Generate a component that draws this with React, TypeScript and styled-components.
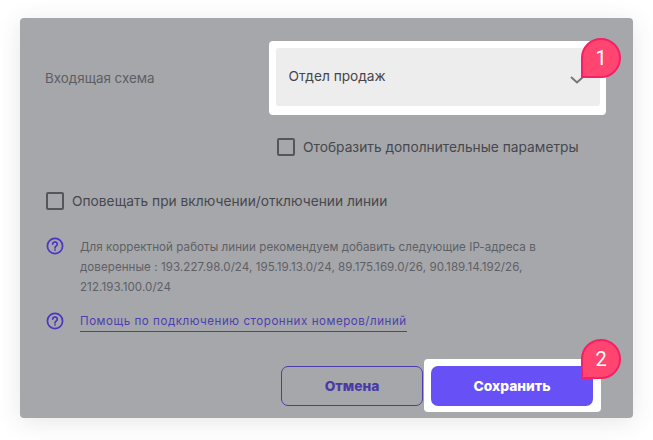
import React, { FC } from 'react';
import styled, { createGlobalStyle } from 'styled-components';

const GlobalStyle = createGlobalStyle`
  html, body {
    margin: 0;
    padding: 0;
    background: #ffffff;
  }
  body {
    font-family: Inter, "Noto Sans", "Liberation Sans", sans-serif;
  }
`;

const Page = styled.div`
  width: 653px;
  height: 440px;
  padding: 18px 20px 22px;
  box-sizing: border-box;
  overflow: hidden;
`;

const Modal = styled.div`
  height: 400px;
  padding: 23px 27px 0 25px;
  box-sizing: border-box;
  background-color: #a6a7ab;
  border-radius: 4px;
  box-shadow: 0 4px 24px rgba(60, 60, 70, 0.12);
`;

const SchemeRow = styled.div`
  display: grid;
  grid-template-columns: 224px 337px;
  align-items: center;
`;

const FieldLabel = styled.span`
  font-size: 13.4px;
  color: #5d5e63;
`;

const Highlight = styled.div<{ $pad: string }>`
  position: relative;
  padding: ${(p) => p.$pad};
  background-color: #ffffff;
  border-radius: 4px;
`;

const Select = styled.div`
  height: 58px;
  padding: 0 16px 2px 12.5px;
  display: flex;
  align-items: center;
  justify-content: space-between;
  box-sizing: border-box;
  background-color: #ededed;
  border-radius: 3px;
  font-size: 13.7px;
  color: #45464b;
`;

const Chevron = styled.svg`
  width: 14px;
  height: 8px;
  margin-top: 8px;
`;

const Badge = styled.div<{ $top: number; $right: number }>`
  position: absolute;
  top: ${(p) => p.$top}px;
  right: ${(p) => p.$right}px;
  width: 40px;
  height: 40px;
  box-sizing: border-box;
  display: flex;
  align-items: center;
  justify-content: center;
  background-color: #ff4570;
  border: 2px solid #f52066;
  border-radius: 50% 50% 50% 0;
  font-family: Roboto, "Liberation Sans", sans-serif;
  font-size: 20px;
  color: #ffffff;
`;

const CheckRow = styled.label<{ $indent: number; $top: number }>`
  display: flex;
  align-items: center;
  gap: 8px;
  margin: ${(p) => p.$top}px 0 0 ${(p) => p.$indent}px;
  font-size: 13.75px;
  color: #47484d;
`;

const Box = styled.span`
  width: 18px;
  height: 18px;
  box-sizing: border-box;
  border: 2px solid #55565b;
  border-radius: 2px;
`;

const Note = styled.div<{ $top: number }>`
  display: flex;
  gap: 16px;
  margin: ${(p) => p.$top}px 0 0 1px;
`;

const NoteIcon = styled.svg`
  flex: none;
  width: 18px;
  height: 18px;
`;

const NoteText = styled.p`
  margin: 0;
  width: 470px;
  font-size: 11.6px;
  letter-spacing: 0.05px;
  line-height: 20px;
  color: #5f6065;
`;

const HelpLink = styled.a`
  height: 19px;
  font-size: 11.6px;
  letter-spacing: 0.52px;
  line-height: 19px;
  color: #4d3fae;
  border-bottom: 1px solid #4a3cc0;
`;

const Footer = styled.div`
  display: flex;
  justify-content: flex-end;
  align-items: center;
  margin: 27px 5px 0 0;
`;

const CancelBtn = styled.button`
  width: 142px;
  height: 40px;
  margin-right: 1px;
  padding: 0;
  background: transparent;
  border: 1px solid #4a3cab;
  border-radius: 7px;
  font: 800 13.8px Inter, "Noto Sans", sans-serif;
  color: #4a3aa6;
`;

const SaveBtn = styled.button`
  display: block;
  width: 162px;
  height: 40px;
  padding: 0;
  background-color: #6750f5;
  border: 0;
  border-radius: 7px;
  font: 800 13.8px Inter, "Noto Sans", sans-serif;
  color: #ffffff;
`;

const HelpIcon: FC = () => (
  <NoteIcon viewBox="0 0 18 18" fill="none" stroke="#4a35c4" strokeWidth="1.7">
    <circle cx="9" cy="9" r="7.6" />
    <path d="M6.7 7.1a2.3 2.3 0 1 1 3.5 2c-.8.5-1.2.9-1.2 1.8" strokeLinecap="round" />
    <circle cx="9" cy="13" r="0.5" fill="#4a35c4" strokeWidth="0.8" />
  </NoteIcon>
);

const App: FC = () => (
  <Page>
    <GlobalStyle />
    <Modal>
      <SchemeRow>
        <FieldLabel>Входящая схема</FieldLabel>
        <Highlight $pad="7px 6px 9px 7px">
          <Select>
            Отдел продаж
            <Chevron viewBox="0 0 14 8" fill="none" stroke="#75767a" strokeWidth="2">
              <path d="M1 1l6 5.5L13 1" />
            </Chevron>
          </Select>
          <Badge $top={-3} $right={-15}>1</Badge>
        </Highlight>
      </SchemeRow>
      <CheckRow $indent={232} $top={23}>
        <Box />
        Отобразить дополнительные параметры
      </CheckRow>
      <CheckRow $indent={1} $top={36}>
        <Box />
        Оповещать при включении/отключении линии
      </CheckRow>
      <Note $top={27}>
        <HelpIcon />
        <NoteText>
          Для корректной работы линии рекомендуем добавить следующие IP-адреса в доверенные :
          193.227.98.0/24, 195.19.13.0/24, 89.175.169.0/26, 90.189.14.192/26, 212.193.100.0/24
        </NoteText>
      </Note>
      <Note $top={15}>
        <HelpIcon />
        <HelpLink>Помощь по подключению сторонних номеров/линий</HelpLink>
      </Note>
      <Footer>
        <CancelBtn>Отмена</CancelBtn>
        <Highlight $pad="7px 8px 6px 7px">
          <SaveBtn>Сохранить</SaveBtn>
          <Badge $top={-20} $right={-20}>2</Badge>
        </Highlight>
      </Footer>
    </Modal>
  </Page>
);

export default App;
